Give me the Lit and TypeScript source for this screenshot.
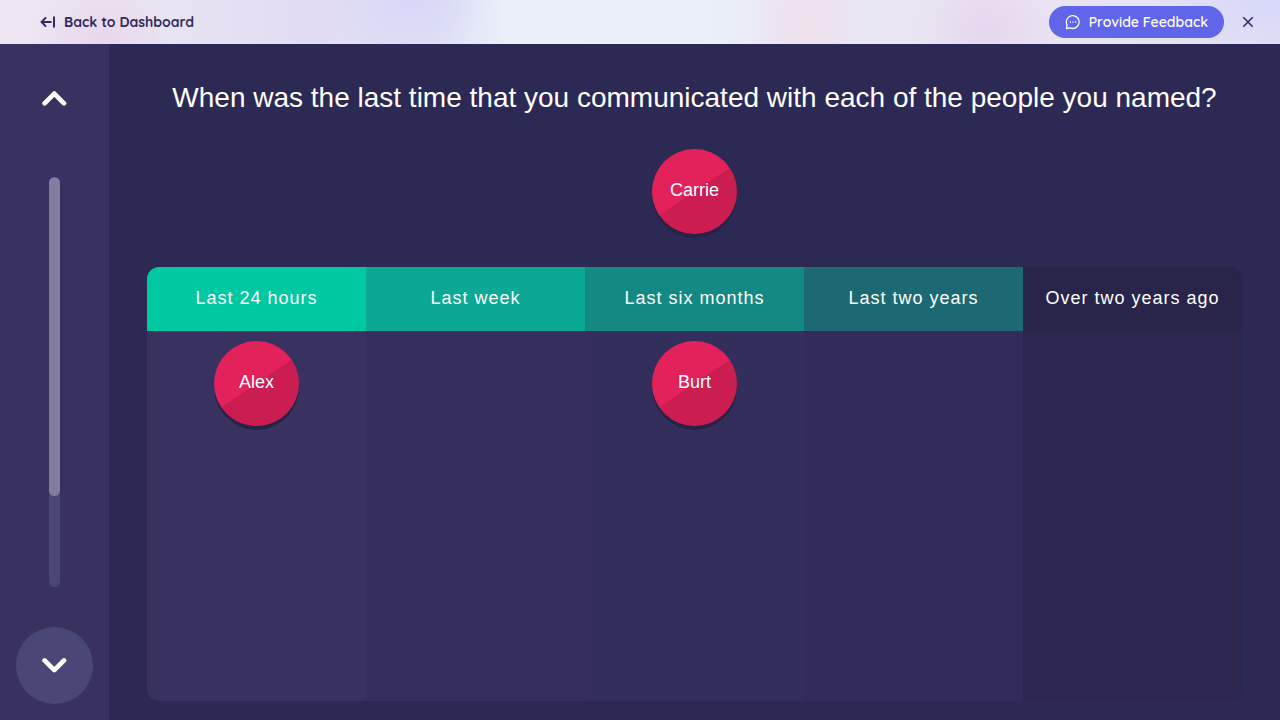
import { LitElement, html, css, svg } from "lit";
import { customElement, property, state } from "lit/decorators.js";

interface Bin {
  label: string;
  tone: string;
  people: string[];
}

const chevron = (points: string) => html`
  <svg class="chevron" width="25" height="17" viewBox="0 0 25 17" aria-hidden="true">
    ${svg`<polyline points=${points} fill="none" stroke="#fff" stroke-width="4.7" stroke-linecap="round" stroke-linejoin="round"></polyline>`}
  </svg>
`;

@customElement("person-node")
export class PersonNode extends LitElement {
  @property() name = "";

  static styles = css`
    :host {
      display: block;
    }
    .node {
      box-sizing: border-box;
      width: 85px;
      height: 85px;
      padding: 0 0 4px;
      border: 0;
      border-radius: 50%;
      background: linear-gradient(146deg, #e3215b 50%, #cc1d53 50%);
      box-shadow: 0 4px 0 #272347;
      color: #fff;
      font: 18px/24px "Liberation Sans", Arial, sans-serif;
      cursor: grab;
    }
  `;

  render() {
    return html`<button class="node" type="button">${this.name}</button>`;
  }
}

@customElement("app-root")
export class AppRoot extends LitElement {
  @state() private progress = 77.8;

  @state() private bins: Bin[] = [
    { label: "Last 24 hours", tone: "tone-1", people: ["Alex"] },
    { label: "Last week", tone: "tone-2", people: [] },
    { label: "Last six months", tone: "tone-3", people: ["Burt"] },
    { label: "Last two years", tone: "tone-4", people: [] },
    { label: "Over two years ago", tone: "tone-5", people: [] },
  ];

  static styles = css`
    :host {
      display: flex;
      flex-direction: column;
      min-height: 100vh;
      background: #2d2955;
      color: #fff;
      font-family: "Liberation Sans", Arial, sans-serif;
    }
    .topbar {
      display: flex;
      align-items: center;
      justify-content: space-between;
      box-sizing: border-box;
      height: 44px;
      padding: 0 24px 0 40px;
      background:
        radial-gradient(ellipse 70px 60px at 8% 90%, #e9d7ec 0%, #e9d7ec00 100%),
        radial-gradient(ellipse 80px 60px at 32% 0%, #d7d6f8 0%, #d7d6f800 100%),
        radial-gradient(ellipse 60px 70px at 63% 60%, #efdfeb 0%, #efdfeb00 100%),
        radial-gradient(ellipse 80px 70px at 77% 70%, #e6d7ee 0%, #e6d7ee00 100%),
        radial-gradient(ellipse 110px 60px at 99% 0%, #d7d7f9 0%, #d7d7f900 100%),
        linear-gradient(90deg, #efe6f1 0%, #e8e4f2 12%, #e2dcf2 24%, #dfe0f5 34%, #ebf0f8 40%, #ebf1f9 54%, #e9e8f3 62%, #eae5f2 80%, #e0e0f5 100%);
      color: #2f2b5f;
      font-family: Quicksand, Lato, sans-serif;
    }
    .back {
      display: flex;
      align-items: center;
      gap: 8px;
      color: inherit;
      font-size: 14px;
      font-weight: 700;
      line-height: 20px;
      text-decoration: none;
    }
    .actions {
      display: flex;
      align-items: center;
      gap: 16px;
    }
    .feedback {
      display: flex;
      align-items: center;
      gap: 8px;
      height: 32px;
      padding: 0 16px;
      border: 0;
      border-radius: 16px;
      background: #6065ea;
      color: #fff;
      font: 600 14px/20px Quicksand, Lato, sans-serif;
    }
    .close {
      display: flex;
      padding: 2px;
      border: 0;
      background: none;
      color: inherit;
    }
    .stage {
      display: flex;
      flex: 1;
    }
    .rail {
      display: flex;
      flex-direction: column;
      align-items: center;
      gap: 40px;
      padding: 16px;
      background: #39315f;
    }
    .step {
      display: flex;
      align-items: center;
      justify-content: center;
      width: 77px;
      height: 77px;
      padding: 0;
      border: 0;
      border-radius: 50%;
      background: transparent;
    }
    .step.next {
      background: #4a4677;
    }
    .track {
      flex: 1;
      width: 11px;
      border-radius: 6px;
      background: #4a4677;
      overflow: hidden;
    }
    .fill {
      border-radius: 6px;
      background: #837d9f;
    }
    .main {
      display: flex;
      flex: 1;
      flex-direction: column;
      min-width: 0;
      padding: 32px 38px 19px;
    }
    .question {
      margin: 0;
      font-size: 28px;
      font-weight: 400;
      line-height: 44px;
      text-align: center;
    }
    .pending {
      display: flex;
      justify-content: center;
      padding: 29px 0 33px;
    }
    .bins {
      display: grid;
      flex: 1;
      grid-template-columns: repeat(5, 1fr);
      border-radius: 12px;
      overflow: hidden;
    }
    .bin {
      display: flex;
      flex-direction: column;
    }
    .label {
      margin: 0;
      padding: 19px 8px 21px;
      font-size: 18px;
      font-weight: 400;
      line-height: 24px;
      letter-spacing: 1px;
      text-align: center;
      background: var(--head);
    }
    .drop {
      display: flex;
      flex: 1;
      flex-direction: column;
      align-items: center;
      gap: 12px;
      padding-top: 10px;
      background: var(--body);
    }
    .tone-1 { --head: #00c9a2; --body: #39315f; }
    .tone-2 { --head: #0ba993; --body: #362f5e; }
    .tone-3 { --head: #148983; --body: #332e5c; }
    .tone-4 { --head: #1c6974; --body: #332c5b; }
    .tone-5 { --head: #28244a; --body: #2d274f; }
  `;

  render() {
    return html`
      <header class="topbar">
        <a class="back" href="#dashboard">
          <svg width="16" height="16" viewBox="0 0 16 16" fill="none" stroke="currentColor" stroke-width="2" aria-hidden="true">
            <path d="M6 3.4 L1.6 8 L6 12.6 M2 8 H11.5 M14 2.5 V13.5"></path>
          </svg>
          Back to Dashboard
        </a>
        <div class="actions">
          <button class="feedback" type="button">
            <svg width="16" height="16" viewBox="0 0 16 16" fill="none" stroke="currentColor" stroke-width="1.3" aria-hidden="true">
              <path d="M1.5 14.5 L2 10.8 A6.4 6.4 0 1 1 5.2 13.9 Z" stroke-linejoin="round"></path>
              <path d="M4.8 8 H5.9 M7.5 8 H8.6 M10.2 8 H11.3"></path>
            </svg>
            Provide Feedback
          </button>
          <button class="close" type="button" aria-label="Close">
            <svg width="12" height="12" viewBox="0 0 12 12" fill="none" stroke="currentColor" stroke-width="1.5" aria-hidden="true">
              <path d="M1.3 1.3 L10.7 10.7 M10.7 1.3 L1.3 10.7"></path>
            </svg>
          </button>
        </div>
      </header>
      <div class="stage">
        <nav class="rail" aria-label="Interview progress">
          <button class="step" type="button" aria-label="Previous">${chevron("2.6,13.3 12.3,3.6 22,13.3")}</button>
          <div class="track" role="progressbar" aria-label="Progress" aria-valuenow=${this.progress}>
            <div class="fill" style="height: ${this.progress}%"></div>
          </div>
          <button class="step next" type="button" aria-label="Next">${chevron("2.6,3.4 12.3,13.1 22,3.4")}</button>
        </nav>
        <main class="main">
          <h1 class="question">When was the last time that you communicated with each of the people you named?</h1>
          <div class="pending"><person-node name="Carrie"></person-node></div>
          <div class="bins">
            ${this.bins.map(
              (bin) => html`
                <section class="bin ${bin.tone}">
                  <h2 class="label">${bin.label}</h2>
                  <div class="drop">${bin.people.map((p) => html`<person-node name=${p}></person-node>`)}</div>
                </section>
              `
            )}
          </div>
        </main>
      </div>
    `;
  }
}
